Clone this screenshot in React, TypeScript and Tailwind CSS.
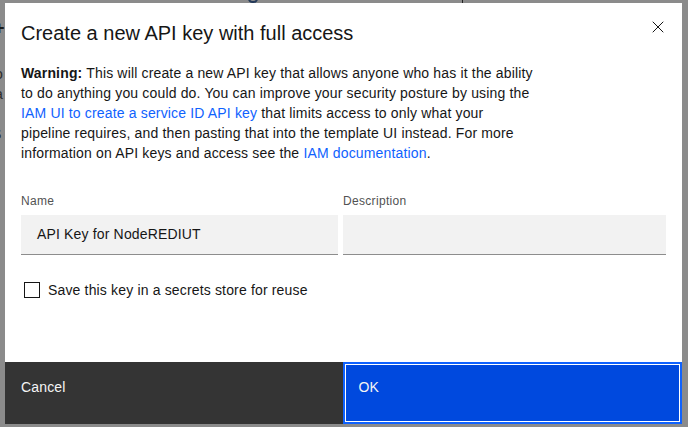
import { X } from 'lucide-react';

const font = { fontFamily: '"Liberation Sans", Arial, sans-serif' };

export default function App() {
  return (
    <div className="relative h-[427px] w-[688px] overflow-hidden bg-white" style={font}>
      {/* page behind the modal */}
      <div className="absolute inset-0 bg-[#8b8b8b]">
        <div className="absolute left-[-6px] top-[18px] text-[18px] font-bold leading-5 text-[#1b1b1b]">+H</div>
        <div className="absolute left-[-8px] top-[64px] text-[14px] leading-5 text-[#2a2a2a]">
          <div>lo</div>
          <div>la</div>
          <div>ll</div>
          <div>S</div>
        </div>
        <div className="absolute left-[248px] top-[-6px] h-[9px] w-[10px] rounded-full border-2 border-[#243a5a]" />
        <div className="absolute left-[462px] top-0 h-[3px] w-px bg-[#222]" />
      </div>

      {/* modal */}
      <div className="absolute left-[5px] top-[3px] flex h-[421px] w-[677px] flex-col bg-white text-[#161616]">
        <button className="absolute right-0 top-0 flex h-12 w-12 items-center justify-center text-[#161616]">
          <X size={20} strokeWidth={1.2} />
        </button>

        <h2 className="pl-4 pt-4 text-[20px] leading-7 text-[#161616]">Create a new API key with full access</h2>

        <p className="mt-4 pl-4 text-[14px] leading-5 tracking-[0.16px]">
          <strong className="font-bold">Warning:</strong> This will create a new API key that allows anyone who has it the ability
          <br />
          to do anything you could do. You can improve your security posture by using the
          <br />
          <a className="text-[#0f62fe]">IAM UI to create a service ID API key</a> that limits access to only what your
          <br />
          pipeline requires, and then pasting that into the template UI instead. For more
          <br />
          information on API keys and access see the <a className="text-[#0f62fe]">IAM documentation</a>.
        </p>

        <div className="mt-[30px] flex gap-[5px] px-4">
          <div className="flex w-[317px] flex-col">
            <label className="mb-[6px] text-[12px] leading-4 tracking-[0.32px] text-[#525252]">Name</label>
            <div className="flex h-10 items-center border-b border-[#8d8d8d] bg-[#f2f2f2] px-4 text-[14px] tracking-[0.16px] text-[#161616]">
              API Key for NodeREDIUT
            </div>
          </div>
          <div className="flex flex-1 flex-col">
            <label className="mb-[6px] text-[12px] leading-4 tracking-[0.32px] text-[#525252]">Description</label>
            <div className="h-10 border-b border-[#8d8d8d] bg-[#f2f2f2]" />
          </div>
        </div>

        <label className="ml-[19px] mt-[25px] flex items-center gap-2 text-[14px] leading-5 tracking-[0.16px]">
          <span className="h-4 w-4 border border-[#161616] bg-white" />
          Save this key in a secrets store for reuse
        </label>

        <div className="mt-auto flex h-[62px]">
          <button className="flex flex-1 items-start bg-[#343434] pl-4 pt-4 text-left text-[14px] leading-[18px] tracking-[0.16px] text-[#f4f4f4]">
            Cancel
          </button>
          <button className="flex flex-1 items-start border-2 border-[#0f62fe] bg-[#0049de] pl-[14px] pt-[14px] text-left text-[14px] leading-[18px] tracking-[0.16px] text-[#f4f4f4] shadow-[inset_0_0_0_1px_#ffffff]">
            OK
          </button>
        </div>
      </div>
    </div>
  );
}
